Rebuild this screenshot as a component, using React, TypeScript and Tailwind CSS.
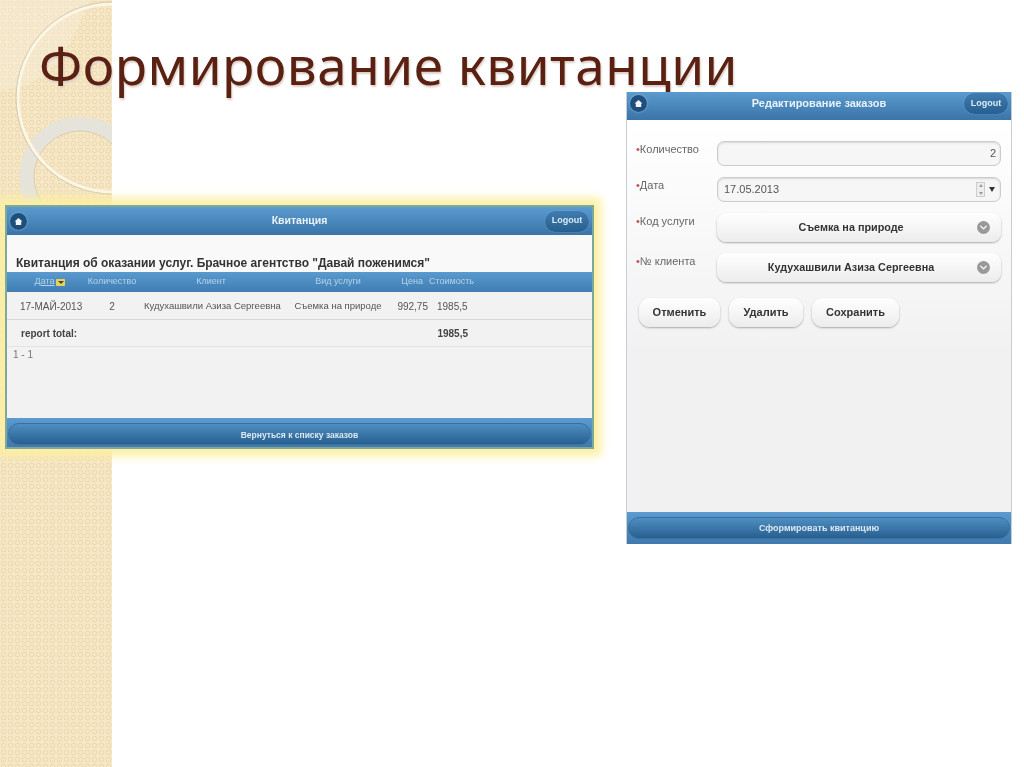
import type { ReactNode } from 'react';
import { ChevronDown } from 'lucide-react';

const arial = "font-['Liberation_Sans',Arial,sans-serif]";

function HomeButton() {
  return (
    <span className="flex size-[17px] items-center justify-center rounded-full bg-[#1d4f7c] shadow-[0_0_2px_#a9cbe6]">
      <svg viewBox="0 0 10 10" className="size-[9px]" fill="#f4f4f4" aria-hidden="true">
        <path d="M5 1 L9.4 5 H8 V9 H2 V5 H.6 Z" />
      </svg>
    </span>
  );
}

function Header({ title, size }: { title: string; size: string }) {
  return (
    <div className={`grid h-[28px] shrink-0 grid-cols-[44px_1fr_44px] items-center bg-gradient-to-b from-[#5b9bcf] to-[#3a74a8] px-[3px] ${size}`}>
      <HomeButton />
      <span className="text-center font-bold text-[#e8f2fa]">{title}</span>
      <span className="flex h-[21px] w-[44px] items-center justify-center rounded-full bg-gradient-to-b from-[#3f7cb0] to-[#27608f] text-[9px] font-bold text-[#dbe9f4] shadow-[0_0_1px_#9fc3e0]">
        Logout
      </span>
    </div>
  );
}

function Footer({ label, outer, inner }: { label: string; outer: string; inner: string }) {
  return (
    <div className={`flex shrink-0 items-end bg-gradient-to-b from-[#5b9bcf] to-[#3f79ad] px-[1px] ${outer}`}>
      <span className={`flex w-full items-center justify-center rounded-full border border-[#3b6f9e] bg-gradient-to-b from-[#4f8ec2] to-[#27608f] font-bold text-[#dce8f2] ${inner}`}>
        {label}
      </span>
    </div>
  );
}

function ReceiptWindow() {
  return (
    <div className={`absolute top-[205px] left-[5px] flex h-[244px] w-[589px] flex-col border-2 border-[#7fa89c] bg-[#f2f2f2] shadow-[0_0_9px_7px_#fdf0a0] blur-[0.4px] ${arial}`}>
      <Header title="Квитанция" size="text-[10.5px]" />
      <div className="flex h-[37px] shrink-0 items-end bg-[#f9f9f9] pl-[9px] text-[12px] font-bold text-[#333]">
        Квитанция об оказании услуг. Брачное агентство "Давай поженимся"
      </div>
      <div className="grid h-[20px] shrink-0 grid-cols-[64px_64px_134px_114px_36px_60px] items-center bg-gradient-to-b from-[#5a9ace] to-[#3f7db3] pl-[9px] text-center text-[9px] whitespace-nowrap text-[#b4d2ea]">
        <span className="flex items-center justify-center gap-[2px] pl-[4px] underline">
          Дата
          <span className="flex h-[7px] w-[9px] items-center justify-center rounded-[1px] bg-[#e8d25a]">
            <span className="border-x-[3px] border-t-[3px] border-x-transparent border-t-[#444]" />
          </span>
        </span>
        <span>Количество</span>
        <span>Клиент</span>
        <span className="pl-[6px]">Вид услуги</span>
        <span className="pr-[5px] text-right">Цена</span>
        <span className="pl-[1px] text-left">Стоимость</span>
      </div>
      <div className="grid h-[28px] shrink-0 grid-cols-[64px_64px_134px_114px_36px_60px] items-center border-b border-[#d8d8d8] pt-[1px] pl-[9px] text-center text-[10px] whitespace-nowrap text-[#555]">
        <span className="pl-[4px]">17-МАЙ-2013</span>
        <span>2</span>
        <span className="text-[9.5px]">Кудухашвили Азиза Сергеевна</span>
        <span className="pl-[6px] text-[9.5px]">Съемка на природе</span>
        <span className="text-right">992,75</span>
        <span className="pl-[9px] text-left">1985,5</span>
      </div>
      <div className="flex h-[27px] shrink-0 items-center justify-between border-b border-[#e2e2e2] pr-[124px] pl-[14px] text-[10px] font-bold text-[#444]">
        <span>report total:</span>
        <span>1985,5</span>
      </div>
      <div className="flex-1 pl-[6px] text-[10px] text-[#777]">1 - 1</div>
      <Footer label="Вернуться к списку заказов" outer="h-[29px] pb-[2px]" inner="h-[22px] pt-[3px] text-[8.5px]" />
    </div>
  );
}

function Field({ label, children }: { label: string; children: ReactNode }) {
  return (
    <div className="flex items-start">
      <span className="w-[81px] shrink-0 text-[11px] text-[#666]">
        <span className="text-[#c0504d]">•</span>
        {label}
      </span>
      {children}
    </div>
  );
}

function Select({ value }: { value: string }) {
  return (
    <div className="relative flex h-[29px] w-[284px] items-center justify-center rounded-[9px] bg-gradient-to-b from-white to-[#ececec] pr-[16px] text-[10.8px] font-bold text-[#333] shadow-[0_1px_2px_#a8a8a8]">
      {value}
      <span className="absolute right-[11px] flex size-[13px] items-center justify-center rounded-full bg-[#999]">
        <ChevronDown className="size-[11px] text-white" strokeWidth={3} />
      </span>
    </div>
  );
}

function ActionButton({ label, width }: { label: string; width: string }) {
  return (
    <span className={`flex h-[29px] items-center justify-center rounded-[11px] bg-gradient-to-b from-white to-[#ececec] text-[11px] font-bold text-[#333] shadow-[0_1px_2px_#a8a8a8] ${width}`}>
      {label}
    </span>
  );
}

function OrderWindow() {
  return (
    <div className={`absolute top-[92px] left-[626px] flex h-[452px] w-[386px] flex-col border-x border-[#c8ccd4] bg-[#f1f1f1] blur-[0.4px] ${arial}`}>
      <Header title="Редактирование заказов" size="pb-[5px] text-[11px]" />
      <div className="flex h-[225px] shrink-0 flex-col bg-gradient-to-b from-white to-[#f2f2f2] px-[9px] pt-[21px]">
        <div className="flex flex-col gap-[11px]">
          <Field label="Количество">
            <div className="flex h-[25px] w-[284px] items-center justify-end rounded-[7px] border border-[#ccc] bg-[#f6f6f6] pr-[4px] text-[11px] text-[#555] shadow-[inset_0_1px_2px_#d8d8d8]">
              2
            </div>
          </Field>
          <Field label="Дата">
            <div className="flex h-[25px] w-[284px] items-center justify-between rounded-[7px] border border-[#ccc] bg-[#f6f6f6] pr-[5px] pl-[6px] text-[11px] text-[#555] shadow-[inset_0_1px_2px_#d8d8d8]">
              17.05.2013
              <span className="flex items-center gap-[4px]">
                <span className="flex h-[15px] w-[9px] flex-col justify-between border border-[#ccc] bg-[#eee]">
                  <span className="mx-auto mt-[1px] border-x-[2px] border-b-[3px] border-x-transparent border-b-[#999]" />
                  <span className="mx-auto mb-[1px] border-x-[2px] border-t-[3px] border-x-transparent border-t-[#999]" />
                </span>
                <span className="border-x-[3px] border-t-[5px] border-x-transparent border-t-[#333]" />
              </span>
            </div>
          </Field>
          <Field label="Код услуги">
            <Select value="Съемка на природе" />
          </Field>
          <Field label="№ клиента">
            <Select value="Кудухашвили Азиза Сергеевна" />
          </Field>
        </div>
        <div className="mt-[16px] flex gap-[9px] pl-[3px]">
          <ActionButton label="Отменить" width="w-[81px]" />
          <ActionButton label="Удалить" width="w-[74px]" />
          <ActionButton label="Сохранить" width="w-[87px]" />
        </div>
      </div>
      <div className="flex-1" />
      <Footer label="Сформировать квитанцию" outer="h-[32px] pb-[5px]" inner="h-[22px] pt-[1px] text-[9px]" />
    </div>
  );
}

function SideArt() {
  return (
    <svg className="absolute top-0 left-0 h-[767px] w-[112px]" viewBox="0 0 112 767" aria-hidden="true">
      <defs>
        <pattern id="dots" width="7" height="7" patternUnits="userSpaceOnUse">
          <rect width="7" height="7" fill="#f6e7c6" />
          <circle cx="3.5" cy="3.5" r="2.3" fill="none" stroke="#ebd6a8" strokeWidth="0.9" />
        </pattern>
      </defs>
      <rect width="112" height="767" fill="url(#dots)" />
      <path d="M0 90 Q55 90 85 10 L90 0 H0 Z" fill="#f7f0de" opacity="0.4" />
      <circle cx="80" cy="177" r="53.5" fill="none" stroke="#e6e3da" strokeWidth="14" />
      <circle cx="80" cy="177" r="46" fill="none" stroke="#cfc8b4" strokeWidth="0.8" />
      <circle cx="112" cy="98" r="94" fill="none" stroke="#fbf6e6" strokeWidth="3" />
      <circle cx="112" cy="98" r="96" fill="none" stroke="#c9bfa6" strokeWidth="0.7" />
    </svg>
  );
}

export default function App() {
  return (
    <div className="relative h-[767px] w-[1024px] overflow-hidden bg-white">
      <SideArt />
      <h1 className="relative pt-[29px] pl-[39px] font-['Noto_Sans',sans-serif] text-[53px] leading-[72px] tracking-[0.5px] text-[#5a2112] [text-shadow:1px_2px_2px_#dccfc8]">
        Формирование квитанции
      </h1>
      <ReceiptWindow />
      <OrderWindow />
    </div>
  );
}
